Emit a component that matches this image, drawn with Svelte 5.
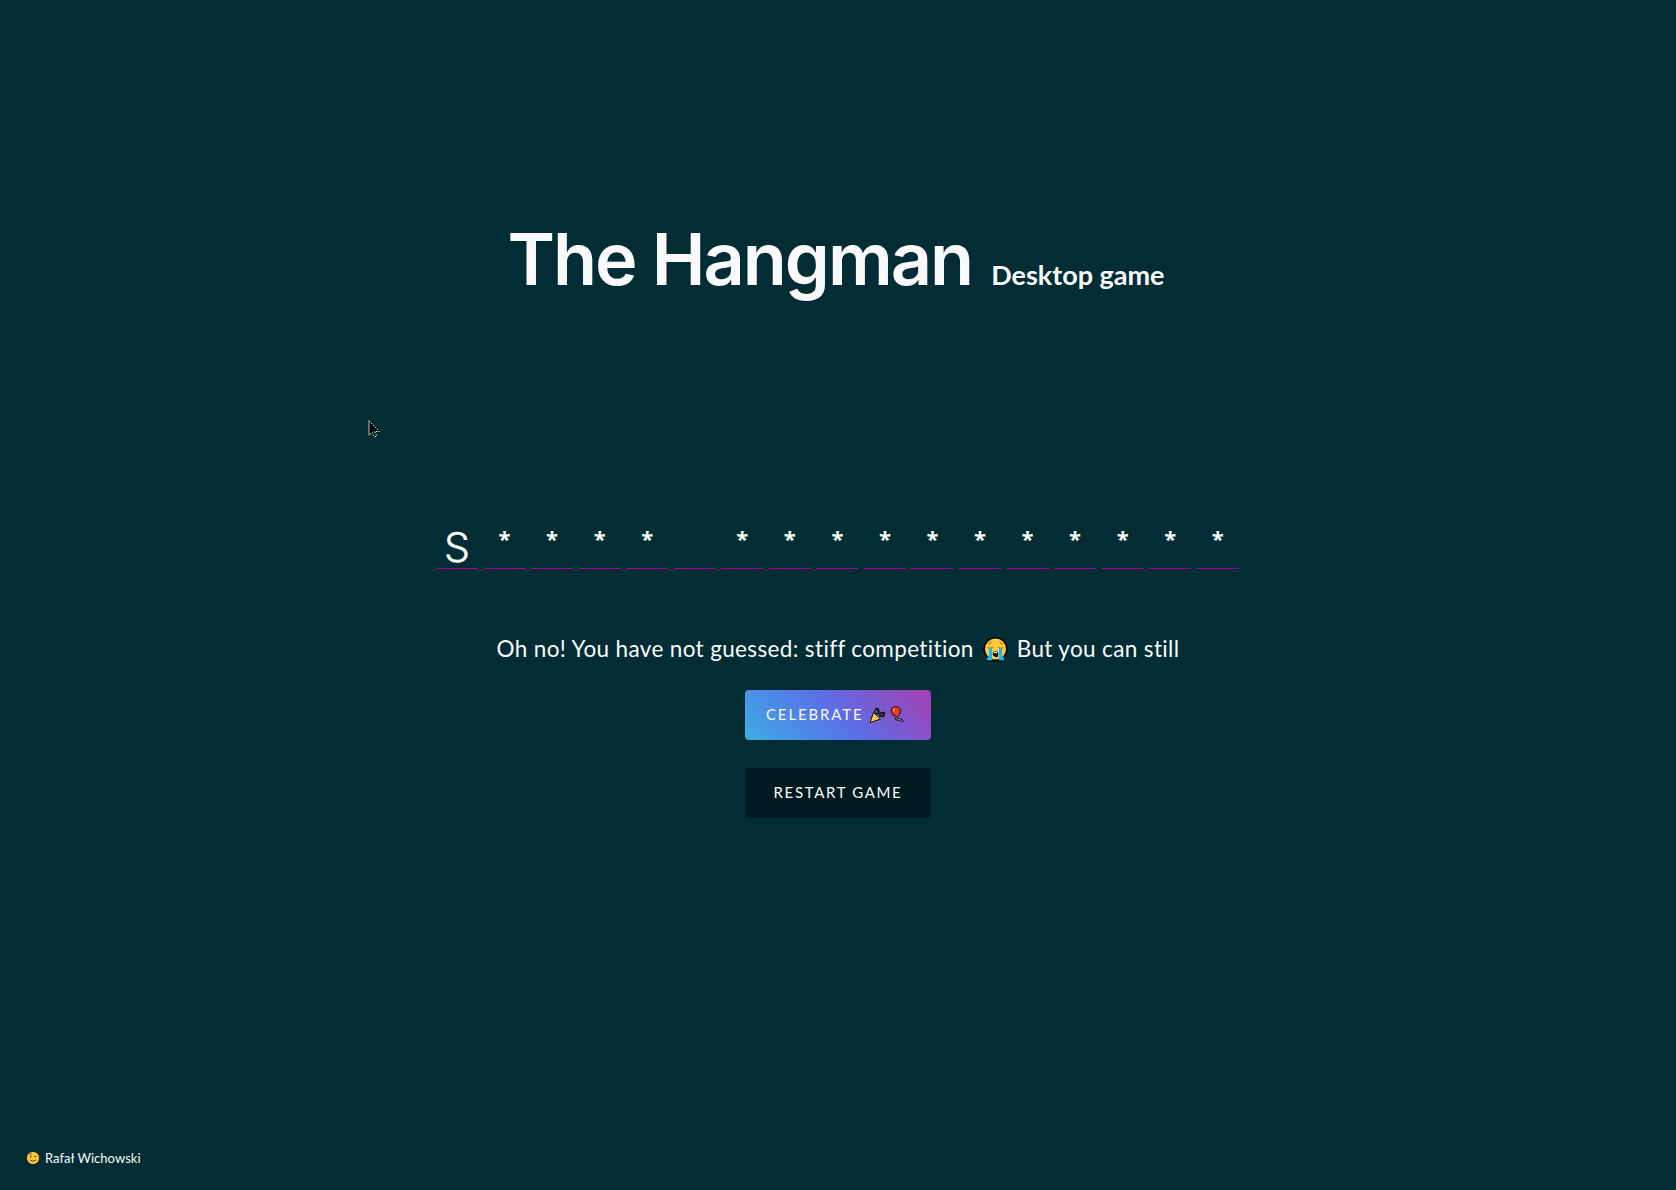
<script>
  const slots = [...'S**** ***********'];
</script>

<main>
  <h1>The Hangman <small>Desktop game</small></h1>

  <div class="word">
    {#each slots as letter}
      <span class="slot" class:hidden={letter === '*'}>{letter}</span>
    {/each}
  </div>

  <p class="message">
    <span class="lead">Oh no! You have not guessed: stiff competition</span>
    <svg class="cry" viewBox="0 0 25 25" aria-hidden="true">
      <circle cx="12.5" cy="12" r="11.4" fill="#ffc83d" stroke="#050b0d" stroke-width="1.7" />
      <path d="M4.500 10.500q3 1.300 5.500-.3M20.500 10.500q-3 1.300-5.500-.3M5 7.300l3.300-2M20 7.300l-3.300-2" fill="none" stroke="#b8741a" stroke-width="1.1" />
      <path d="M6 11h3v12.500H4q-.5-3 2-5zM16 11h3v7.500q2.500 2 2 5h-5z" fill="#15b8ec" />
      <path d="M9.800 17.500q0-3.500 2.700-3.500t2.700 3.500-2.700 2.500-2.700-2.500z" fill="#071013" />
      <path d="M11 14.800h3v1.300h-3z" fill="#fff" />
      <path d="M3.500 24.200h18" stroke="#050b0d" stroke-width="1.200" />
    </svg>
    <span class="tail">But you can still</span>
  </p>

  <button class="celebrate">
    <span>Celebrate</span>
    <svg class="party" viewBox="0 0 17 17" aria-hidden="true">
      <path d="M5 4l1-1.500L8 .8l2 1.500v4L7 7zM10 6.500l4-1.500 2 1-.5 2-1 2-4-1z" fill="#111" stroke="#111" />
      <path d="M5.500 3.500l2-.5L9 6 7 6zM8 2h1v2z" fill="#0083a8" />
      <path d="M11 8l2-1.500 2.500 1-2.500 1.500z" fill="#803020" />
      <path d="M1 15.700L4.500 5.500l7 6.500z" fill="#ffc83d" stroke="#111" stroke-linejoin="round" />
    </svg>
    <svg class="balloon" viewBox="0 0 14 17" aria-hidden="true">
      <path d="M6 11.500q0 2 3 2 3-.3 3.500 2.500" fill="none" stroke="#111" stroke-width="2.600" />
      <path d="M6 11.500q0 2 3 2 3-.3 3.500 2.500" fill="none" stroke="#8d8d8d" stroke-width="1" />
      <path d="M1 5q0-4.300 4.500-4.300T10.500 5Q10.500 8.500 7 11 1 9 1 5z" fill="#f03a17" stroke="#111" />
      <ellipse cx="4" cy="3.800" rx="1" ry="1.500" fill="#ff8a5c" />
    </svg>
  </button>
  <button class="restart"><span>Restart game</span></button>

  <footer>
    <svg class="wink" viewBox="0 0 14 14" aria-hidden="true">
      <circle cx="7" cy="7" r="6.500" fill="#ffc83d" stroke="#10191a" stroke-width=".8" />
      <ellipse cx="4.700" cy="5.500" rx=".8" ry="1.100" fill="#553b18" />
      <path d="M8 5.800q1.300-1 2.500 0M4 9q3 2.600 6 0M3.500 3.200l2-.5" fill="none" stroke="#553b18" />
    </svg>
    <span>Rafał Wichowski</span>
  </footer>

  <svg class="cursor" viewBox="0 0 13 18" aria-hidden="true">
    <path d="M1 .8v14.700l3.300-3.200 2.200 4.700 2.200-1-2-4.500h4.600z" fill="#000" />
    <path d="M1 .8l10.300 10.700H6.700l2 4.500-2.200 1-2.200-4.700L1 15.500" fill="none" stroke="#fff" stroke-dasharray="1.500 1.300" />
    <path d="M1 .5v15" stroke="#b8c1c3" />
  </svg>
</main>

<style>
  :global(body) {
    background: #022d35;
  }

  main {
    position: relative;
    box-sizing: border-box;
    width: 100%;
    height: 1190px;
    padding-top: 215px;
    display: flex;
    flex-direction: column;
    align-items: center;
    overflow: hidden;
    color: #fafafa;
    font-family: Lato, sans-serif;
  }

  h1 {
    display: flex;
    align-items: baseline;
    gap: 19px;
    height: 88px;
    margin: 0;
    padding-right: 4px;
    font: 600 72px/88px Inter, sans-serif;
    letter-spacing: -2px;
    white-space: nowrap;
  }

  small {
    font: 700 27px/36px Lato, sans-serif;
    letter-spacing: 0;
  }

  .word {
    display: flex;
    gap: 5.550px;
    width: 804px;
    margin-top: 217px;
  }

  .slot {
    box-sizing: border-box;
    flex: none;
    width: 42px;
    height: 49px;
    border-bottom: 1px solid #a000a0;
    font: 300 41px/54px Inter, sans-serif;
    text-align: center;
    -webkit-text-stroke: .4px currentColor;
  }

  .slot.hidden {
    font: 700 22px/36px "Open Sans", sans-serif;
    -webkit-text-stroke: 0;
  }

  .message {
    display: flex;
    align-items: center;
    height: 40px;
    margin: 60px 0 0;
    font-size: 22.500px;
    line-height: 26px;
    letter-spacing: .36px;
    white-space: nowrap;
  }

  .message span {
    padding-bottom: 1px;
  }

  .cry {
    width: 25px;
    height: 25px;
    margin: 0 9px;
  }

  button {
    display: flex;
    align-items: center;
    justify-content: center;
    box-sizing: border-box;
    width: 186px;
    height: 50px;
    padding: 0 0 2px;
    border: 0;
    border-radius: 4px;
    color: #fafafa;
    font: 400 15px/20px Lato, sans-serif;
    letter-spacing: 1.650px;
    text-transform: uppercase;
    white-space: nowrap;
  }

  .celebrate {
    margin-top: 21px;
    justify-content: flex-start;
    padding-left: 21px;
    background: linear-gradient(45deg, #3caee2, #5a6fe8 50%, #a83eb0);
    letter-spacing: 1.850px;
  }

  .party {
    width: 17px;
    height: 17px;
    margin: 2px 0 0 6px;
  }

  .balloon {
    width: 14px;
    height: 17px;
    margin: 1px 0 0 4px;
  }

  .restart {
    margin-top: 28px;
    background: #001b20;
  }

  footer {
    display: flex;
    align-items: center;
    align-self: flex-start;
    gap: 5px;
    margin: auto 0 22px 26px;
    font-size: 13px;
    line-height: 20px;
    letter-spacing: .05px;
  }

  .wink {
    width: 14px;
    height: 14px;
  }

  .cursor {
    position: absolute;
    left: 368px;
    top: 420px;
    width: 13px;
    height: 18px;
  }
</style>
